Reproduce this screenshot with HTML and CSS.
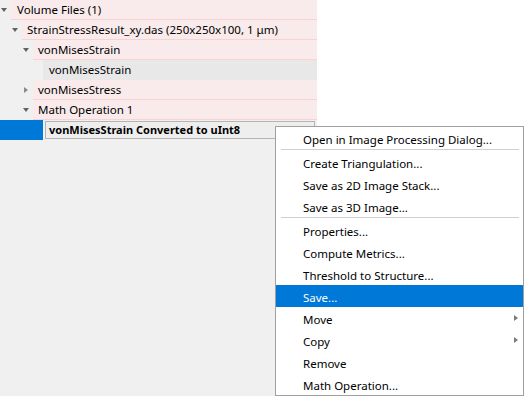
FILE: index.html
```html
<!DOCTYPE html>
<html>
<head>
<meta charset="utf-8">
<link rel="stylesheet" href="styles.css">
</head>
<body>
<div class="page">
  <div class="tree">
    <div class="row lvl0">
      <span class="twisty"><span class="tri-down"></span></span>
      <div class="item">Volume Files (1)</div>
    </div>
    <div class="row lvl1">
      <span class="twisty"><span class="tri-down"></span></span>
      <div class="item">StrainStressResult_xy.das (250x250x100, 1 μm)</div>
    </div>
    <div class="row lvl2">
      <span class="twisty"><span class="tri-down"></span></span>
      <div class="item">vonMisesStrain</div>
    </div>
    <div class="row lvl3">
      <div class="item leaf">vonMisesStrain</div>
    </div>
    <div class="row lvl2">
      <span class="twisty"><span class="tri-right"></span></span>
      <div class="item">vonMisesStress</div>
    </div>
    <div class="row lvl2">
      <span class="twisty"><span class="tri-down"></span></span>
      <div class="item">Math Operation 1</div>
    </div>
    <div class="row selected">
      <span class="sel-band"></span>
      <div class="item current">vonMisesStrain Converted to uInt8</div>
    </div>
  </div>

  <div class="menu">
    <div class="mi">Open in Image Processing Dialog...</div>
    <div class="sep"></div>
    <div class="mi">Create Triangulation...</div>
    <div class="mi">Save as 2D Image Stack...</div>
    <div class="mi">Save as 3D Image...</div>
    <div class="sep"></div>
    <div class="mi">Properties...</div>
    <div class="mi">Compute Metrics...</div>
    <div class="mi">Threshold to Structure...</div>
    <div class="mi active">Save...</div>
    <div class="mi sub">Move<span class="sub-arrow"></span></div>
    <div class="mi sub">Copy<span class="sub-arrow"></span></div>
    <div class="mi">Remove</div>
    <div class="mi">Math Operation...</div>
  </div>
</div>
</body>
</html>
```

FILE: styles.css
```css
html, body {
  margin: 0;
  padding: 0;
  background: #ffffff;
}
body {
  font-family: "Noto Sans", "Open Sans", sans-serif;
  font-size: 11.5px;
  color: #000;
}
.page {
  position: relative;
  width: 524px;
  height: 396px;
  overflow: hidden;
}
.tree {
  width: 317px;
  height: 396px;
  background: #f0f0f0;
}
.row {
  display: flex;
  height: 20px;
}
.lvl0 { padding-left: 0; }
.lvl1 { padding-left: 11px; }
.lvl2 { padding-left: 22px; }
.lvl3 { padding-left: 43px; }
.twisty {
  width: 11px;
  flex: none;
  display: flex;
  align-items: center;
  justify-content: center;
}
.tri-down {
  width: 0;
  height: 0;
  border-left: 3.5px solid transparent;
  border-right: 3.5px solid transparent;
  border-top: 4px solid #626262;
  margin-left: -4px;
}
.tri-right {
  width: 0;
  height: 0;
  border-top: 3.5px solid transparent;
  border-bottom: 3.5px solid transparent;
  border-left: 4px solid #8a8a8a;
  margin-left: -3px;
}
.item {
  flex: 1;
  box-sizing: border-box;
  height: 20px;
  line-height: 19px;
  padding-left: 5px;
  background: #f9ebeb;
  border-bottom: 1px solid #fbd2d2;
  white-space: nowrap;
}
.lvl0 .item { padding-left: 6px; }
.item.leaf {
  background: #e8e8e8;
  border-bottom: none;
  line-height: 20px;
  padding-left: 6px;
}
.sel-band {
  width: 43px;
  flex: none;
  background: #0078d7;
}
.item.current {
  margin: 1px 2px 1px 2px;
  height: 18px;
  line-height: 16px;
  border: 1px solid #b4b4b4;
  background: #eeeeee;
  font-weight: bold;
  font-size: 11px;
  padding-left: 3px;
}
.menu {
  position: absolute;
  left: 275px;
  top: 126px;
  width: 247px;
  border: 1px solid #a0a0a0;
  background: #ffffff;
  display: flex;
  flex-direction: column;
}
.mi {
  box-sizing: border-box;
  height: 22px;
  padding-top: 2px;
  padding-left: 27px;
  display: flex;
  align-items: center;
  white-space: nowrap;
}
.mi.active {
  background: #0078d7;
  color: #ffffff;
}
.sep {
  height: 1px;
  background: #d0d0d0;
  margin: 0 4px 1px 5px;
}
.sub { justify-content: space-between; padding-right: 5px; }
.sub-arrow {
  width: 0;
  height: 0;
  margin-top: -2px;
  border-top: 3.5px solid transparent;
  border-bottom: 3.5px solid transparent;
  border-left: 4px solid #7a7a7a;
}
```
